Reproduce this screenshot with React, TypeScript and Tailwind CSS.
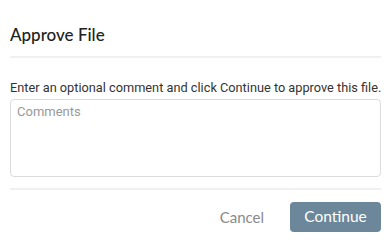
import React from 'react';

const App: React.FC = () => {
  return (
    <div className="w-[391px] h-[243px] bg-white px-[10px] font-['Roboto',sans-serif]">
      {/* Header */}
      <div className="pt-[26px] pb-[12px] border-b-2 border-[#f0f0f0]">
        <h2 className="text-[17px] leading-[18px] text-[#222] font-['Lato',sans-serif] font-medium">Approve File</h2>
      </div>

      {/* Body */}
      <div className="pt-[22px] pb-[11px] border-b-2 border-[#f0f0f0]">
        <p className="whitespace-nowrap text-[12.75px] leading-[16px] text-[#333]">
          Enter an optional comment and click Continue to approve this file.
        </p>
        <textarea
          placeholder="Comments"
          className="mt-[3px] block w-full h-[78px] resize-none rounded-[4px] border border-[#dcdcdc] px-[6px] py-[4px] text-[13px] leading-[16px] text-[#333] placeholder:text-[#999] outline-none"
        />
      </div>

      {/* Footer */}
      <div className="flex items-center justify-end gap-[26px] pt-[12px]">
        <button className="text-[15px] text-[#8a8a8a] font-['Lato',sans-serif]">Cancel</button>
        <button className="w-[91px] h-[30px] rounded-[4px] bg-[#6b8799] text-white text-[15.5px] font-['Lato',sans-serif]">
          Continue
        </button>
      </div>
    </div>
  );
};

export default App;
